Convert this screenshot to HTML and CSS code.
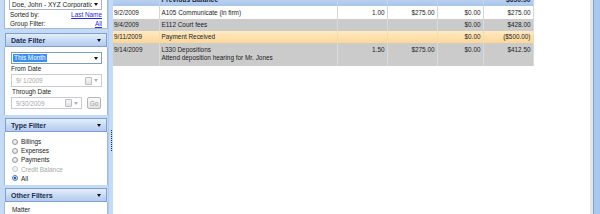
FILE: index.html
```html
<!DOCTYPE html>
<html>
<head>
<meta charset="utf-8">
<link rel="stylesheet" href="styles.css">
</head>
<body>
<div class="app">
  <aside class="side">
    <div class="side-col">
      <section class="panel top">
        <div class="combo client"><span class="combo-text">Doe, John - XYZ Corporation</span><span class="arrow"></span></div>
        <div class="kv"><span>Sorted by:</span><a href="#">Last Name</a></div>
        <div class="kv"><span>Group Filter:</span><a href="#">All</a></div>
      </section>

      <section class="group g-date">
        <header class="group-head"><span>Date Filter</span><span class="caret"></span></header>
        <div class="group-body date-body">
          <div class="combo range"><span class="sel">This Month</span><span class="arrow"></span></div>
          <div class="lbl">From Date</div>
          <div class="datebox wide"><span class="dtext">9/ 1/2009</span><span class="cal"></span><span class="arrow dim"></span></div>
          <div class="lbl lbl2">Through Date</div>
          <div class="daterow">
            <div class="datebox short"><span class="dtext">9/30/2009</span><span class="cal"></span><span class="arrow dim"></span></div>
            <button class="go">Go</button>
          </div>
        </div>
      </section>

      <section class="group g-type">
        <header class="group-head"><span>Type Filter</span><span class="caret"></span></header>
        <div class="group-body type-body">
          <div class="radio"><span class="dot"></span><span>Billings</span></div>
          <div class="radio"><span class="dot"></span><span>Expenses</span></div>
          <div class="radio"><span class="dot"></span><span>Payments</span></div>
          <div class="radio disabled"><span class="dot"></span><span>Credit Balance</span></div>
          <div class="radio checked"><span class="dot"></span><span>All</span></div>
        </div>
      </section>

      <section class="group g-other">
        <header class="group-head"><span>Other Filters</span><span class="caret"></span></header>
        <div class="group-body other-body">
          <div class="lbl">Matter</div>
        </div>
      </section>
    </div>
    <div class="splitter"><span class="grip"></span></div>
  </aside>

  <main class="grid">
    <table class="ledger">
      <colgroup>
        <col class="c-date"><col class="c-desc"><col class="c-n"><col class="c-n"><col class="c-s"><col class="c-n">
      </colgroup>
      <tr class="r-head">
        <td></td><td class="desc">Previous Balance</td><td></td><td></td><td></td><td class="num">$650.50</td>
      </tr>
      <tr class="r-white r1">
        <td class="date">9/2/2009</td><td class="desc">A105 Communicate (in firm)</td><td class="num">1.00</td><td class="num">$275.00</td><td class="num">$0.00</td><td class="num">$275.00</td>
      </tr>
      <tr class="r-gray">
        <td class="date">9/4/2009</td><td class="desc">E112 Court fees</td><td class="num"></td><td class="num"></td><td class="num">$0.00</td><td class="num">$428.00</td>
      </tr>
      <tr class="r-sel">
        <td class="date">9/11/2009</td><td class="desc">Payment Received</td><td class="num"></td><td class="num"></td><td class="num">$0.00</td><td class="num">($500.00)</td>
      </tr>
      <tr class="r-gray r-tall">
        <td class="date">9/14/2009</td><td class="desc">L330 Depositions<br>Attend deposition hearing for Mr. Jones</td><td class="num">1.50</td><td class="num">$275.00</td><td class="num">$0.00</td><td class="num">$412.50</td>
      </tr>
    </table>
  </main>

  <div class="edge"></div>
</div>
</body>
</html>
```
FILE: styles.css
```css
html, body {
  margin: 0;
  padding: 0;
}
body {
  width: 600px;
  height: 214px;
  overflow: hidden;
  font-family: "Liberation Sans", Arial, sans-serif;
  font-size: 6.4px;
  color: #1c1c1c;
  background: #fff;
}

.app {
  display: flex;
  height: 214px;
}

/* ---------- left side ---------- */
.side {
  display: flex;
  flex: none;
  width: 113px;
  background: #c4daf5;
}
.side-col {
  width: 104px;
  margin-left: 4px;
  display: flex;
  flex-direction: column;
}
.panel {
  background: #fff;
  border-left: 1px solid #a3b9d6;
  border-right: 1px solid #a3b9d6;
}
.top {
  height: 32px;
  box-sizing: border-box;
  overflow: hidden;
  border-bottom: 1px solid #a3b9d6;
}

.combo {
  display: flex;
  align-items: center;
  box-sizing: border-box;
  height: 12px;
  border: 1px solid #a7b3c2;
  background: #fff;
}
.combo .arrow {
  margin-left: auto;
  margin-right: 3px;
}
.client {
  margin: -2px 5px 0 4px;
  padding-left: 2px;
}
.combo-text {
  white-space: nowrap;
  overflow: hidden;
  width: 80px;
  font-size: 6.6px;
}
.arrow {
  flex: none;
  width: 0;
  height: 0;
  border-left: 2.5px solid transparent;
  border-right: 2.5px solid transparent;
  border-top: 3px solid #111;
}
.arrow.dim {
  border-top-color: #b0b0b0;
  margin: 0 3px 0 2px;
}

.kv {
  display: flex;
  justify-content: space-between;
  align-items: center;
  height: 9px;
  padding: 0 5px;
}
.kv:first-of-type {
  margin-top: 2px;
}
.top .kv + .kv {
  margin-top: 0;
}
.kv a {
  color: #2a2ad8;
  text-decoration: underline;
}

.group {
  display: flex;
  flex-direction: column;
}
.g-date { margin-top: 4px; }
.g-type { margin-top: 3px; }
.g-other { margin-top: 3px; }

.group-head {
  display: flex;
  align-items: center;
  justify-content: space-between;
  box-sizing: border-box;
  height: 14px;
  margin: 0 1px;
  padding: 0 5px 0 5px;
  border: 1px solid #7f9fd0;
  background: linear-gradient(#e4eefb, #c9dbf3 50%, #b3cbee);
  font-weight: bold;
  font-size: 7px;
  color: #1b2f52;
}
.caret {
  width: 0;
  height: 0;
  border-left: 2.5px solid transparent;
  border-right: 2.5px solid transparent;
  border-top: 3px solid #111;
}
.group-body {
  background: #fff;
  border-left: 1px solid #a3b9d6;
  border-right: 1px solid #a3b9d6;
  box-sizing: border-box;
}

.date-body {
  height: 68px;
  padding: 5px 0 0 6px;
}
.range {
  width: 91px;
  border-color: #7f9db9;
  padding-left: 1px;
}
.sel {
  background: #3a8ff0;
  color: #fff;
  padding: 0 1px;
  line-height: 8px;
}
.lbl {
  height: 9px;
  line-height: 9px;
  padding-left: 0;
}
.lbl2 {
  padding-left: 1px;
}
.datebox {
  display: flex;
  align-items: center;
  box-sizing: border-box;
  height: 13px;
  border: 1px solid #c8cbd0;
  color: #a8a8a8;
  padding-left: 4px;
  margin-top: 1px;
}
.wide { width: 91px; }
.short { width: 71px; height: 12px; }
.cal {
  margin-left: auto;
  width: 5px;
  height: 6px;
  border: 1px solid #bdbdbd;
  border-radius: 1px;
  background: linear-gradient(#f6f6f6, #e2e2e2);
}
.daterow {
  display: flex;
  align-items: flex-start;
  gap: 5px;
}
.go {
  box-sizing: border-box;
  width: 14px;
  height: 12px;
  margin-top: 1px;
  padding: 0;
  border: 1px solid #b5b5b5;
  border-radius: 2px;
  background: linear-gradient(#fbfbfb, #e4e4e4);
  font: inherit;
  color: #9c9c9c;
}

.type-body {
  height: 53px;
  padding: 5px 0 0 7px;
}
.radio {
  display: flex;
  align-items: center;
  gap: 3px;
  height: 9.2px;
}
.dot {
  box-sizing: border-box;
  width: 6px;
  height: 6px;
  border-radius: 50%;
  border: 1px solid #9a9a9a;
  background: radial-gradient(circle at 40% 35%, #fafafa, #d2d2d2);
}
.disabled {
  color: #a9a9a9;
}
.disabled .dot {
  border-color: #c9c9c9;
  background: #f1f1f1;
}
.checked .dot {
  border-color: #5b7aa5;
  background: radial-gradient(circle, #1f5fb0 0 1.4px, #dfe7f2 1.6px);
}

.other-body {
  flex: 1;
  height: 20px;
  padding: 3px 0 0 7px;
}

.splitter {
  flex: none;
  width: 5px;
  display: flex;
  justify-content: center;
  background: #c4daf5;
  border-left: 1px solid #b2cbec;
  box-sizing: border-box;
}
.grip {
  margin-top: 130px;
  width: 0;
  height: 21px;
  border-left: 1px dotted #2b2b2b;
}

/* ---------- grid ---------- */
.grid {
  flex: 1;
  overflow: hidden;
  background: #fff;
}
.ledger {
  table-layout: fixed;
  border-collapse: collapse;
  width: 420px;
  margin-top: -6px;
}
.c-date { width: 46px; }
.c-desc { width: 178px; }
.c-n { width: 50px; }
.c-s { width: 46px; }

.ledger td {
  padding: 0 2px;
  border-right: 1px solid #d6d6d6;
  line-height: 8px;
  white-space: nowrap;
  overflow: hidden;
  vertical-align: middle;
}
.ledger td.date { padding-left: 1px; }
.ledger td.num { text-align: right; padding-right: 2px; }

.r-head td {
  height: 12px;
  background: linear-gradient(#c9dbf3, #a9c5ec);
  border-right-color: #c0d4ef;
  font-weight: bold;
  color: #1a2a44;
  font-size: 6.8px;
}
.r1 td { height: 13px; }
.r-white td { background: #fff; }
.r-gray td { height: 12px; background: #cbcbcb; border-right-color: #dadada; }
.r-sel td {
  height: 12px;
  background: linear-gradient(#ffe9c4, #fdd796);
  border-right-color: #f3dcb1;
}
.r-tall td {
  height: 20px;
  vertical-align: top;
  padding-top: 3px;
}

.edge {
  flex: none;
  width: 10px;
  background: linear-gradient(to right, #e6e6e6 0 3px, #7fa3d3 3px 4px, #aac8ee 4px);
}
```
